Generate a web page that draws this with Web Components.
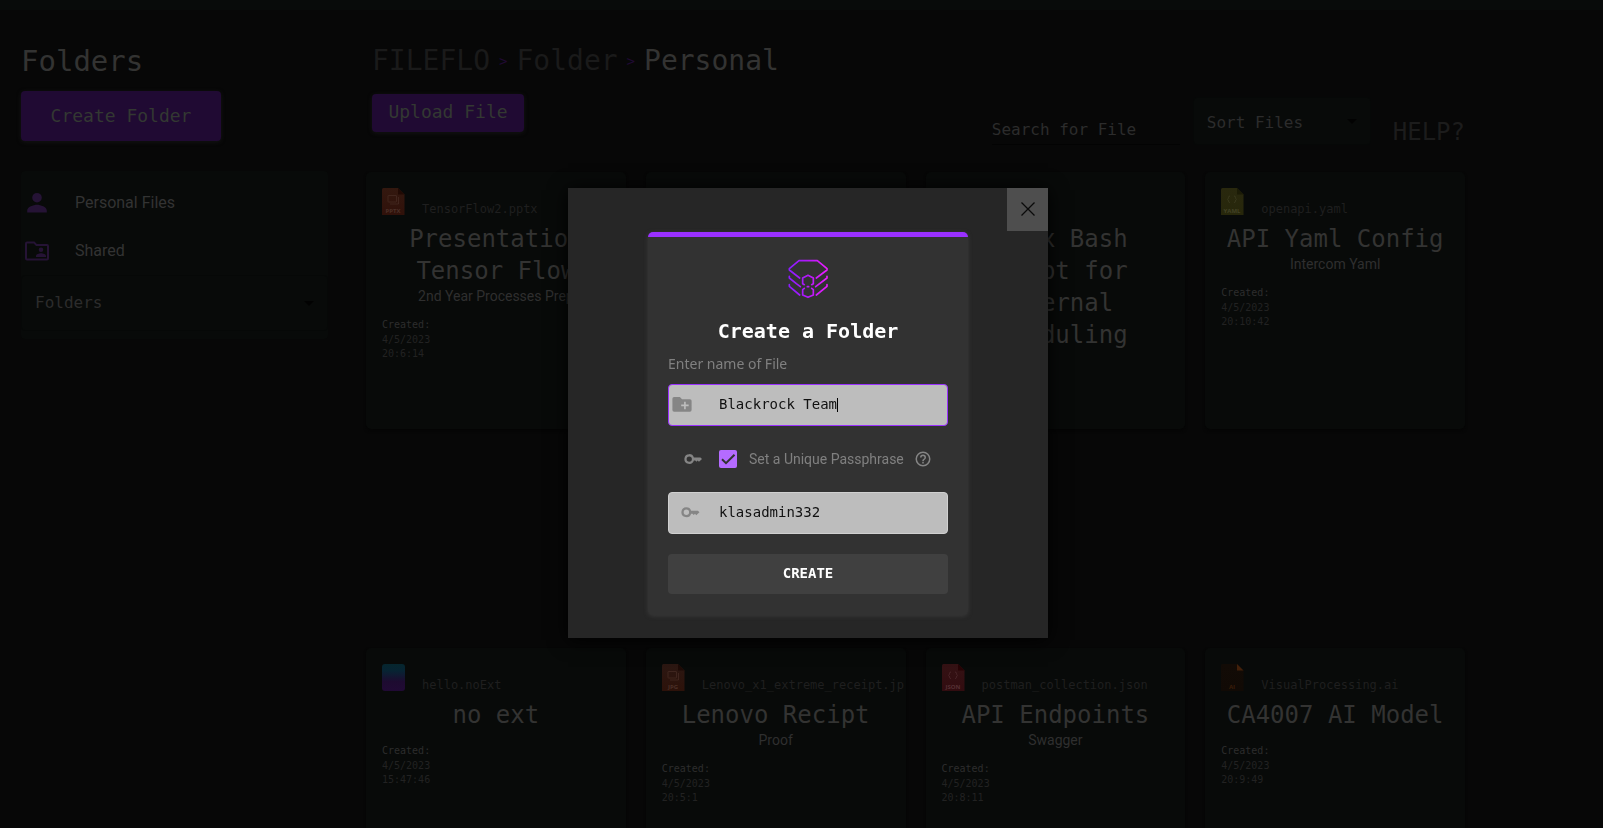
<!DOCTYPE html>
<html lang="en">
<head>
<meta charset="utf-8">
<title>FILEFLO - Personal</title>
<style>
html, body { margin: 0; background: #070707; }
body { font-family: Roboto, sans-serif; color: #333332; --mono: "DejaVu Sans Mono", monospace; }
</style>
</head>
<body>
<flo-app></flo-app>
<script>
const define = (name, html, setup) => {
  const t = document.createElement('template');
  t.innerHTML = html;
  customElements.define(name, class extends HTMLElement {
    constructor() {
      super();
      this.attachShadow({ mode: 'open' }).append(t.content.cloneNode(true));
    }
    connectedCallback() { if (setup) setup(this, this.shadowRoot); }
  });
};

const GLYPHS = {
  slides: '<rect x="6" y="7.500" width="8.500" height="6.500" rx="0.500"/><path d="M8 16h8.500V9"/>',
  braces: '<path d="M9 8q-1.500 0-1.500 1.500t-1 1.800q1 .4 1 1.800t1.500 1.500M13 8q1.500 0 1.500 1.500t1 1.800q-1 .4-1 1.800t-1.500 1.500"/>',
  none: ''
};
const KINDS = {
  PPTX: ['#33180f', '#30110a', '#210a04', '#4b3028', 'slides'],
  JPG: ['#2b1712', '#2d120a', '#1d0a06', '#4b3028', 'slides'],
  JSON: ['#341214', '#320c10', '#260305', '#553034', 'braces'],
  YAML: ['#29280e', '#27270b', '#1b1b06', '#424226', 'braces'],
  AI: ['#120b06', '#110a05', '#42200a', '#3b1d08', 'none']
};
define('file-icon', `<style>:host{display:block;width:23px;height:27px;flex:none}svg{display:block}text{font:bold 6px "Open Sans",sans-serif}</style><svg width="23" height="27" viewBox="0 0 23 27" aria-hidden="true"></svg>`, (el, root) => {
  const kind = el.getAttribute('kind');
  const k = KINDS[kind];
  root.querySelector('svg').innerHTML = k
    ? `<defs><linearGradient id="g" x2="0" y2="1"><stop stop-color="${k[0]}"/><stop offset="1" stop-color="${k[1]}"/></linearGradient></defs>
       <path fill="url(#g)" d="M1.500 0H16l6.500 6.500V27H0V1.500Q0 0 1.500 0z"/><path fill="${k[2]}" d="M16 0l6.500 6.500H16z"/>
       <g fill="none" stroke="${k[3]}" stroke-opacity=".7" stroke-width=".9">${GLYPHS[k[4]]}</g><text x="11" y="25" text-anchor="middle" fill="${k[3]}">${kind}</text>`
    : `<defs><linearGradient id="g" x2="0" y2="1"><stop stop-color="#06262e"/><stop offset=".25" stop-color="#072433"/><stop offset=".65" stop-color="#1d0b30"/><stop offset="1" stop-color="#210a35"/></linearGradient></defs><rect width="23" height="27" rx="3" fill="url(#g)"/>`;
});

define('file-card', `<style>
:host{display:block;box-sizing:border-box;height:257px;padding:16px;border-radius:5px;background:#080a09;box-shadow:0 2px 3px #050505;overflow:hidden}
.head{display:flex;align-items:flex-end;gap:17px;height:27px;margin-bottom:8px}
.name{font:12px/12px var(--mono);color:#1f1f1f;white-space:nowrap}
h2{margin:0;font:24px/32px var(--mono);color:#333332;text-align:center}
p{margin:0 0 3px;font-size:14px;line-height:18px;color:#2f2f2f;text-align:center}
dl{margin:13px 0 0;font:10px/14px var(--mono);color:#222}
dt{margin-bottom:1px;color:#2d2d2d}dd{margin:0}
</style><div class="head"><slot name="icon"></slot><span class="name"><slot name="name"></slot></span></div><h2><slot></slot></h2><slot name="note"></slot><dl><dt>Created:</dt><dd class="d"></dd><dd class="t"></dd></dl>`, (el, root) => {
  if (el.getAttribute('note')) {
    const p = document.createElement('p');
    p.textContent = el.getAttribute('note');
    root.querySelector('slot[name=note]').replaceWith(p);
  }
  if (!el.getAttribute('time')) { root.querySelector('dl').remove(); return; }
  root.querySelector('.d').textContent = el.getAttribute('date');
  root.querySelector('.t').textContent = el.getAttribute('time');
});

define('flo-button', `<style>
:host{display:inline-block}
button{display:block;box-sizing:border-box;width:100%;border:0;border-radius:4px;background:#200a33;color:#333832;font:18px/24px var(--mono);padding:var(--pad);box-shadow:0 1px 4px #141414}
</style><button type="button"><slot></slot></button>`);

define('flo-select', `<style>
:host{display:block;position:relative}
select{display:block;box-sizing:border-box;width:100%;height:100%;appearance:none;background:#080a09;border:1px solid #060807;border-radius:4px;color:#2c2c2c;font:16px/20px var(--mono);padding:var(--top,0) 13px 0;outline:0}
svg{position:absolute;right:14px;top:calc(50% - 2px);fill:#020202}
</style><select aria-label="Choice"></select><svg width="10" height="5"><path d="M0 0h10L5 5z"/></svg>`, (el, root) => {
  root.querySelector('select').add(new Option(el.getAttribute('label')));
});

define('side-bar', `<style>
:host{display:block;box-sizing:border-box;width:328px;padding:32px 0 0 21px;flex:none}
h1{margin:0 0 11px;font:29px/38px var(--mono);color:#333332}
h1+flo-button{width:200px;--pad:13px 0}
nav{margin-top:30px;padding:8px 0;background:#080a09;border-radius:4px}
a{display:flex;align-items:center;height:48px;gap:23px;padding-left:4px;color:#333;text-decoration:none;font-size:16px;line-height:24px}
a svg{width:24px;height:24px;fill:#251335;flex:none;padding-right:3px}
flo-select{height:56px}
</style>
<h1>Folders</h1><flo-button>Create Folder</flo-button>
<nav>
<a href="#personal"><svg viewBox="0 0 24 24"><path d="M12 11.500a4.800 4.800 0 1 0 0-9.600 4.800 4.800 0 0 0 0 9.600zM2.200 21.500v-2C2.200 16 8.500 13.800 12 13.800s9.800 2.200 9.800 5.700v2z"/></svg>Personal Files</a>
<a href="#shared"><svg viewBox="0 0 24 24"><path fill-rule="evenodd" d="M2 2.500h7.500l2.300 2.500H22q2 0 2 2V19.500q0 2-2 2H2q-2 0-2-2v-15q0-2 2-2zM2 4.500v15h20V7H11L8.700 4.500zM16 13a2.300 2.300 0 1 0 0-4.600A2.300 2.300 0 0 0 16 13zM11 18v-1c0-1.800 3-2.800 5-2.800s5 1 5 2.800v1z"/></svg>Shared</a>
<flo-select label="Folders"></flo-select>
</nav>`);

define('file-browser', `<style>
:host{display:block;flex:1;min-width:0;padding:33px 138px 0 38px}
.crumbs{display:flex;align-items:center;gap:9px;padding-left:6px;font:28px/36px var(--mono);color:#1a1a1a}
.crumbs a{color:inherit;text-decoration:none}.crumbs b{font:14px/36px var(--mono);color:#200a33}.crumbs span{color:#333332}
.tools{display:flex;align-items:flex-start;height:78px;margin-top:15px;padding-left:6px}
.tools>flo-button{width:152px;--pad:6px 0 8px}
.right{display:flex;margin-left:auto;padding-top:3px}
.search{width:188px;height:48px;margin-right:13px;border:0;border-bottom:1px solid #030303;background:none;color:#2c2c2c;font:16px/20px var(--mono);padding:17px 0 0;box-sizing:border-box;outline:0}
.search::placeholder{color:#2c2c2c;opacity:1}
.right flo-select{width:178px;height:48px;--top:4px}
.help{margin-left:22px;padding-top:19px;height:32px;color:#1c1c1c;font:24px/32px var(--mono);text-decoration:none}
.grid{display:grid;grid-template-columns:repeat(4,minmax(0,1fr));gap:219px 20px}
</style>
<nav class="crumbs"><a href="#home">FILEFLO</a><b>&gt;</b><a href="#folder">Folder</a><b>&gt;</b><span>Personal</span></nav>
<div class="tools"><flo-button>Upload File</flo-button><div class="right"><input class="search" type="search" aria-label="Search for File" placeholder="Search for File"><flo-select label="Sort Files"></flo-select><a class="help" href="#help">HELP?</a></div></div>
<div class="grid">
<file-card date="4/5/2023" time="20:6:14" note="2nd Year Processes Prep"><file-icon slot="icon" kind="PPTX"></file-icon><span slot="name">TensorFlow2.pptx</span>Presentation Tensor Flow</file-card>
<file-card></file-card>
<file-card>Linux Bash Script for External Scheduling</file-card>
<file-card date="4/5/2023" time="20:10:42" note="Intercom Yaml"><file-icon slot="icon" kind="YAML"></file-icon><span slot="name">openapi.yaml</span>API Yaml Config</file-card>
<file-card date="4/5/2023" time="15:47:46"><file-icon slot="icon"></file-icon><span slot="name">hello.noExt</span>no ext</file-card>
<file-card date="4/5/2023" time="20:5:1" note="Proof"><file-icon slot="icon" kind="JPG"></file-icon><span slot="name">Lenovo_x1_extreme_receipt.jp</span>Lenovo Recipt</file-card>
<file-card date="4/5/2023" time="20:8:11" note="Swagger"><file-icon slot="icon" kind="JSON"></file-icon><span slot="name">postman_collection.json</span>API Endpoints</file-card>
<file-card date="4/5/2023" time="20:9:49"><file-icon slot="icon" kind="AI"></file-icon><span slot="name">VisualProcessing.ai</span>CA4007 AI Model</file-card>
</div>`);

define('flo-logo', `<style>:host{display:block}svg{display:block;margin:auto}</style>
<svg width="40" height="40" viewBox="684 237 120 120" fill="none" stroke="url(#g)" stroke-width="5" stroke-linecap="round" stroke-linejoin="round" aria-hidden="true"><defs><linearGradient id="g" gradientUnits="userSpaceOnUse" x1="687" x2="801" y1="0" y2="0"><stop stop-color="#8c1cff"/><stop offset=".5" stop-color="#b318fa"/><stop offset="1" stop-color="#ec1cff"/></linearGradient></defs>
<path d="M719 294L688 270V266L717 242H772L801 266V270L769 294M688 289V294L709 311L721 320M688 314V319L719 345M801 289V294L767 320M801 314V319L769 345M733 314L728 311V294L744 286L760 294V311L755 314M733 325L728 329V345L744 352L760 345V329L755 325M742 320h4"/></svg>`);

define('flo-field', `<style>
:host{display:block;position:relative}
input{display:block;box-sizing:border-box;width:100%;height:42px;border:1px solid #d0d0d0;border-radius:4px;background:#bdbdbd;color:#111;font:14px/20px var(--mono);padding:0 8px 2px 50px;outline:0}
:host([active]) input{border-color:#9a30ff}
::slotted(svg){position:absolute;left:var(--icon-x);top:11px;width:20px;height:20px;fill:#858585}
i{display:none}
:host([active]) i{display:block;position:absolute;left:calc(51px + 14ch);top:14px;width:1px;height:14px;background:#000;font:14px var(--mono)}
</style><input type="text"><i></i><slot></slot>`, (el, root) => {
  const input = root.querySelector('input');
  input.value = el.getAttribute('value');
  input.setAttribute('aria-label', el.getAttribute('label'));
});

const KEY = '<path fill-rule="evenodd" d="M7 5.500a6.500 6.500 0 1 0 6.200 8.500H15l1.500 1.600L18.200 14l1.700 1.800 1.600-1.500L24 12l-2-2H13.200A6.500 6.500 0 0 0 7 5.500zM7 8.500a3.500 3.500 0 1 1 0 7 3.500 3.500 0 0 1 0-7z"/>';
define('create-dialog', `<style>
:host{position:relative;display:block;box-sizing:border-box;width:480px;padding:44px 80px 23px;background:#262626;box-shadow:0 2px 18px #000}
.close{position:absolute;right:0;top:0;width:41px;height:43px;border:0;padding:0 0 2px;background:#4e4e4e;display:grid;place-items:center}
form{box-sizing:border-box;border-top:5px solid #9a30ff;border-radius:5px;padding:22px 20px 21px;background:#323232;box-shadow:0 1px 4px #3a3a3a}
h2{margin:18px 0 9px;font:bold 20px/28px var(--mono);color:#fff;text-align:center}
.cap{display:block;margin-bottom:10px;font:14px/20px "Noto Sans",sans-serif;color:#808080}
.pass{display:flex;align-items:center;height:66px;padding-left:16px;color:#808080;font-size:14px}
.pass svg{fill:#858585;flex:none}
input{appearance:none;width:18px;height:18px;margin:0 12px 0 17px;border-radius:2px;background:#b56bff url("data:image/svg+xml,%3Csvg xmlns='http://www.w3.org/2000/svg' viewBox='0 0 18 18'%3E%3Cpath d='M3 9.200l4 4L15.500 4.700' fill='none' stroke='%23323232' stroke-width='2'/%3E%3C/svg%3E")}
.pass label{white-space:nowrap;margin-right:10px}
.go{display:block;width:100%;height:40px;margin-top:20px;border:0;border-radius:4px;background:#404040;color:#fff;font:bold 14px/20px var(--mono);padding:0 0 2px}
.f{--icon-x:4px}.k{--icon-x:13px}
</style>
<button class="close" type="button" aria-label="Close"><svg width="14" height="14" stroke="#0a0a0a" stroke-width="1.300"><path d="M.5.5l13 13M13.500.5l-13 13"/></svg></button>
<form><flo-logo></flo-logo><h2>Create a Folder</h2><span class="cap">Enter name of File</span>
<flo-field class="f" active value="Blackrock Team" label="Enter name of File"><svg viewBox="0 0 24 24"><path fill-rule="evenodd" d="M2.500 2.500h7L12 5h9.500Q23.500 5 23.500 7V18q0 2-2 2h-19Q.5 20 .5 18V4.500q0-2 2-2zM14.500 8V11.500H11v2h3.500V17h2v-3.500H20v-2h-3.500V8z"/></svg></flo-field>
<div class="pass"><svg width="18" height="18" viewBox="0 0 24 24">${KEY}</svg><input type="checkbox" id="unique" checked><label for="unique">Set a Unique Passphrase</label><svg width="18" height="18" viewBox="0 0 24 24"><path d="M11 18h2v-2h-2v2zm1-16a10 10 0 1 0 0 20 10 10 0 0 0 0-20zm0 18a8 8 0 1 1 0-16 8 8 0 0 1 0 16zm0-14a4 4 0 0 0-4 4h2a2 2 0 1 1 4 0c0 2-3 1.750-3 5h2c0-2.250 3-2.500 3-5a4 4 0 0 0-4-4z"/></svg></div>
<flo-field class="k" value="klasadmin332" label="Passphrase"><svg viewBox="0 0 26 26">${KEY}</svg></flo-field>
<button class="go" type="button">CREATE</button></form>`);

define('flo-app', `<style>
:host{display:block;height:100vh;overflow:hidden}
header{height:10px;background:#080b0a}
.page{display:flex}
.overlay{position:fixed;inset:0;display:grid;place-items:center;padding:0 0 2px 13px}
</style><header></header><div class="page"><side-bar></side-bar><file-browser></file-browser></div><div class="overlay"><create-dialog role="dialog" aria-label="Create a Folder"></create-dialog></div>`);
</script>
</body>
</html>
